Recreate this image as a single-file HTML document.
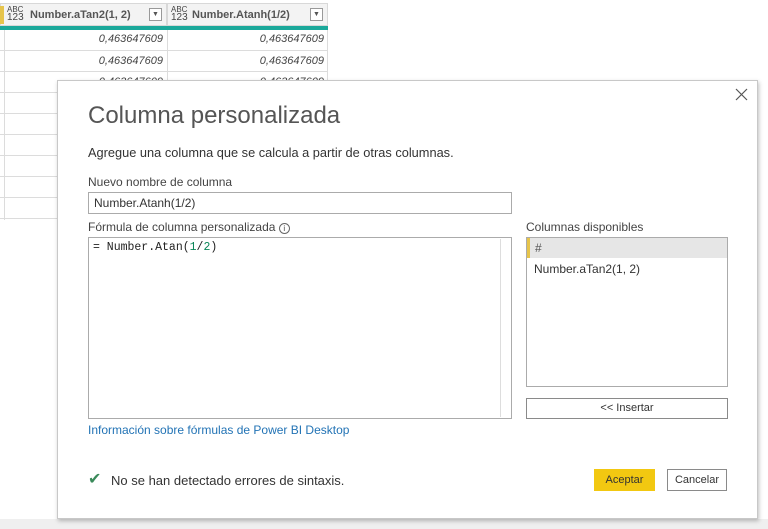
<!DOCTYPE html>
<html><head><style>
*{margin:0;padding:0;box-sizing:border-box}
body{width:768px;height:529px;background:#fff;position:relative;overflow:hidden;font-family:"Liberation Sans",sans-serif;color:#333}
.a{position:absolute}
.hdr{top:3px;height:23px;background:#f3f3f3;border:1px solid #d8d8d8}
.typ{font-size:8px;line-height:8px;color:#444}
.cell{font-style:italic;font-size:11px;color:#444;text-align:right}
.dd{width:13px;height:13px;border:1px solid #999;background:#fff;font-size:7px;text-align:center;line-height:11px;color:#555}
</style></head><body>
<div class="a hdr" style="left:0;width:167px"></div>
<div class="a hdr" style="left:167px;width:161px"></div>
<div class="a" style="left:0;top:6px;width:4px;height:18px;background:#e6c44b"></div>
<div class="a typ" style="left:7px;top:6px">ABC<br><span style="font-size:10px">123</span></div>
<div class="a" style="left:30px;top:9px;font-size:11px;font-weight:bold;color:#555">Number.aTan2(1, 2)</div>
<div class="a dd" style="left:149px;top:8px">▼</div>
<div class="a typ" style="left:171px;top:6px">ABC<br><span style="font-size:10px">123</span></div>
<div class="a" style="left:192px;top:9px;font-size:11px;font-weight:bold;color:#555">Number.Atanh(1/2)</div>
<div class="a dd" style="left:310px;top:8px">▼</div>
<div class="a" style="left:0;top:26px;width:328px;height:4px;background:#1aa89a"></div>
<div class="a" style="left:4px;top:30px;width:1px;height:190px;background:#dcdcdc"></div>
<div class="a" style="left:167px;top:30px;width:1px;height:190px;background:#dcdcdc"></div>
<div class="a" style="left:327px;top:30px;width:1px;height:190px;background:#dcdcdc"></div>
<div class="a cell" style="left:0;top:33px;width:163px">0,463647609</div>
<div class="a cell" style="left:167px;top:33px;width:157px">0,463647609</div>
<div class="a cell" style="left:0;top:55px;width:163px">0,463647609</div>
<div class="a cell" style="left:167px;top:55px;width:157px">0,463647609</div>
<div class="a cell" style="left:0;top:76px;width:163px">0,463647609</div>
<div class="a cell" style="left:167px;top:76px;width:157px">0,463647609</div>
<div class="a" style="left:0;top:50px;width:328px;height:1px;background:#dcdcdc"></div>
<div class="a" style="left:0;top:71px;width:328px;height:1px;background:#dcdcdc"></div>
<div class="a" style="left:0;top:92px;width:58px;height:1px;background:#dcdcdc"></div>
<div class="a" style="left:0;top:113px;width:58px;height:1px;background:#dcdcdc"></div>
<div class="a" style="left:0;top:134px;width:58px;height:1px;background:#dcdcdc"></div>
<div class="a" style="left:0;top:155px;width:58px;height:1px;background:#dcdcdc"></div>
<div class="a" style="left:0;top:176px;width:58px;height:1px;background:#dcdcdc"></div>
<div class="a" style="left:0;top:197px;width:58px;height:1px;background:#dcdcdc"></div>
<div class="a" style="left:0;top:218px;width:58px;height:1px;background:#dcdcdc"></div>
<div class="a" style="left:0;top:519px;width:768px;height:10px;background:#efefef"></div>

<div class="a" style="left:57px;top:80px;width:701px;height:439px;background:#fff;border:1px solid #c8c8c8;box-shadow:1px 2px 4px rgba(0,0,0,.25)">
<svg class="a" style="left:677px;top:7px" width="13" height="13"><path d="M1 1L12 12M12 1L1 12" stroke="#555" stroke-width="1.2"/></svg>
<div class="a" style="left:30px;top:21px;font-size:24px;color:#555">Columna personalizada</div>
<div class="a" style="left:30px;top:64px;font-size:12.8px;color:#333">Agregue una columna que se calcula a partir de otras columnas.</div>
<div class="a" style="left:30px;top:94px;font-size:12px;color:#444">Nuevo nombre de columna</div>
<div class="a" style="left:30px;top:111px;width:424px;height:22px;border:1px solid #ababab;font-size:12px;padding:3px 5px;color:#333">Number.Atanh(1/2)</div>
<div class="a" style="left:30px;top:139px;font-size:12px;color:#444">Fórmula de columna personalizada <span style="display:inline-block;width:11px;height:11px;border:1px solid #666;border-radius:50%;font-size:8px;text-align:center;line-height:9px">i</span></div>
<div class="a" style="left:30px;top:156px;width:424px;height:182px;border:1px solid #ababab">
 <div class="a" style="left:4px;top:3px;font-family:'Liberation Mono',monospace;font-size:11.5px;color:#222">= Number.Atan(<span style="color:#098658">1</span>/<span style="color:#098658">2</span>)</div>
 <div class="a" style="left:411px;top:1px;width:1px;height:178px;background:#ddd"></div>
</div>
<div class="a" style="left:30px;top:342px;font-size:12px;color:#2273b5">Información sobre fórmulas de Power BI Desktop</div>
<div class="a" style="left:468px;top:139px;font-size:12px;color:#444">Columnas disponibles</div>
<div class="a" style="left:468px;top:156px;width:202px;height:150px;border:1px solid #ababab">
 <div class="a" style="left:0;top:0;width:200px;height:20px;background:#e6e6e6;border-left:3px solid #e6c44b;font-size:12px;padding:3px 5px;color:#555">#</div>
 <div class="a" style="left:7px;top:24px;font-size:12px;color:#333">Number.aTan2(1, 2)</div>
</div>
<div class="a" style="left:468px;top:317px;width:202px;height:21px;border:1px solid #8a8a8a;font-size:11px;text-align:center;line-height:19px;color:#333">&lt;&lt; Insertar</div>
<div class="a" style="left:30px;top:388px;font-size:16px;color:#3a8a5a">✔</div>
<div class="a" style="left:53px;top:392px;font-size:13px;color:#333">No se han detectado errores de sintaxis.</div>
<div class="a" style="left:536px;top:388px;width:61px;height:22px;background:#f2c811;font-size:11px;text-align:center;line-height:22px;color:#333">Aceptar</div>
<div class="a" style="left:609px;top:388px;width:60px;height:22px;border:1px solid #8a8a8a;font-size:11px;text-align:center;line-height:20px;color:#333">Cancelar</div>
</div>
</body></html>
